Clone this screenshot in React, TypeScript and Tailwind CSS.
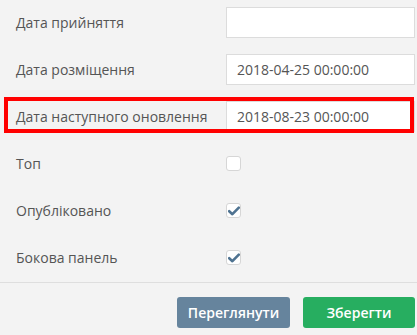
const font = { fontFamily: '"Open Sans", "Noto Sans", sans-serif' };

function TextRow({ label, value, marked }: { label: string; value: string; marked?: boolean }) {
  return (
    <div className="relative flex h-[31px] items-center pl-4">
      <span className="w-[210px] text-[14px] text-[#555]">{label}</span>
      <div className="flex h-[31px] w-[189px] items-center border border-[#dcdcdc] bg-white pl-[10px] text-[14px] text-[#555]">
        {value}
      </div>
      {marked && (
        <div className="pointer-events-none absolute left-[4px] right-[3px] top-[-4px] bottom-[-1px] border-4 border-[#ff0000]" />
      )}
    </div>
  );
}

function CheckRow({ label, checked }: { label: string; checked?: boolean }) {
  return (
    <div className="flex h-[31px] items-center pl-4">
      <span className="w-[210px] text-[14px] text-[#555]">{label}</span>
      <div className="flex h-[15px] w-[15px] items-center justify-center rounded-[3px] border border-[#d6d6d6] bg-white">
        {checked && (
          <svg width="12" height="10" viewBox="0 0 12 10">
            <path d="M1.2 5.2 L4.4 8.2 L10.8 1.6" fill="none" stroke="#4f7391" strokeWidth="2.6" strokeLinecap="round" strokeLinejoin="round" />
          </svg>
        )}
      </div>
    </div>
  );
}

export default function App() {
  return (
    <div className="h-[335px] w-[417px] overflow-hidden bg-[#f3f3f3]" style={font}>
      <div className="flex flex-col gap-4 pt-[7px]">
        <TextRow label="Дата прийняття" value="" />
        <TextRow label="Дата розміщення" value="2018-04-25 00:00:00" />
        <TextRow label="Дата наступного оновлення" value="2018-08-23 00:00:00" marked />
        <CheckRow label="Топ" />
        <CheckRow label="Опубліковано" checked />
        <CheckRow label="Бокова панель" checked />
      </div>
      <div className="mt-[9px] border-t border-[#dedede]" />
      <div className="flex justify-end gap-[13px] pr-[2px] pt-[14px]">
        <button className="h-[31px] w-[113px] rounded-[3px] bg-[#66849d] text-[14px] font-semibold text-white">
          Переглянути
        </button>
        <button className="h-[31px] w-[112px] rounded-[3px] bg-[#27ae60] text-[14px] font-semibold text-white">
          Зберегти
        </button>
      </div>
    </div>
  );
}
